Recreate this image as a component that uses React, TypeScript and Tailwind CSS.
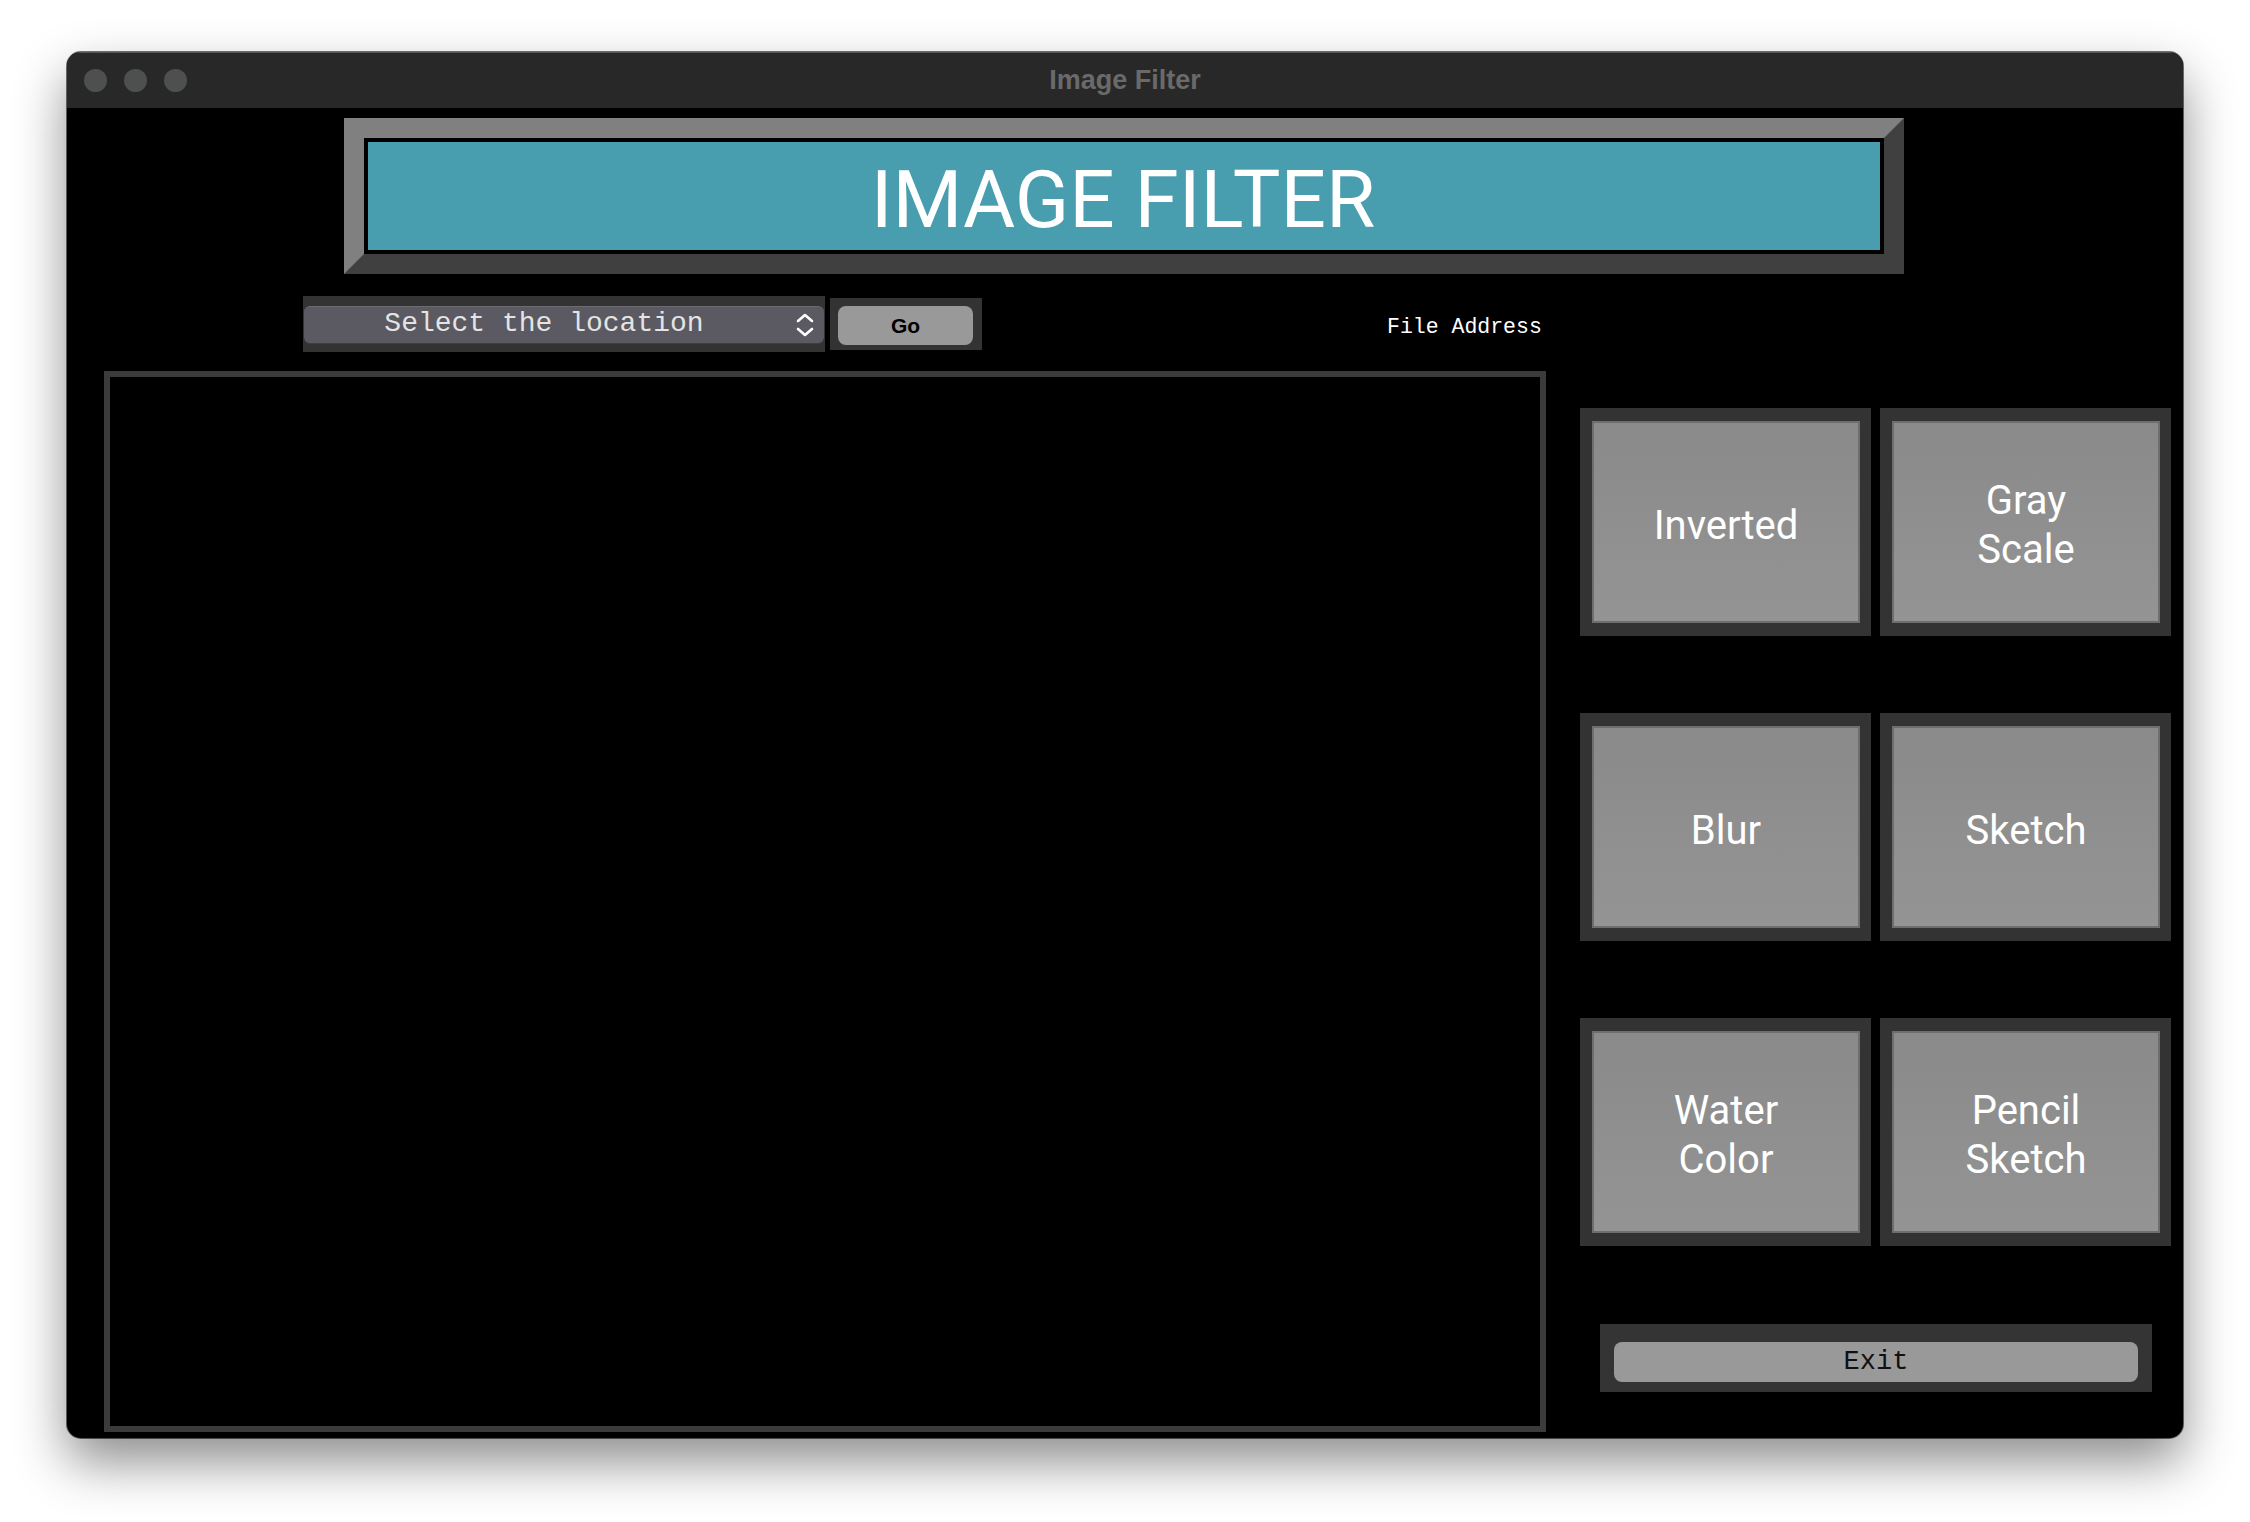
import React from 'react';

const mono = "font-['Liberation_Mono','Courier_New',monospace]";

const FilterButton: React.FC<{ lines: string[] }> = ({ lines }) => (
  <div className="bg-[#333333] pl-[12px] pr-[11px] py-[13px] w-[291px] h-[228px]">
    <button className="w-full h-full pt-[6px] border-2 border-[#6e6e6e] bg-linear-to-b from-[#8a8a8a] to-[#949494] flex flex-col items-center justify-center text-white text-[40px] leading-[49px] font-['Roboto',sans-serif]">
      {lines.map((l) => (
        <span key={l}>{l}</span>
      ))}
    </button>
  </div>
);

const App: React.FC = () => {
  return (
    <div className="w-[2250px] h-[1522px] bg-white pt-[52px] pl-[67px]">
      <div className="w-[2116px] h-[1386px] rounded-[14px] overflow-hidden flex flex-col bg-black shadow-[0_0_0_1px_rgba(0,0,0,0.55),0_24px_52px_rgba(0,0,0,0.45)]">
        {/* title bar */}
        <div className="h-[56px] shrink-0 bg-[#282828] grid grid-cols-[1fr_auto_1fr] items-center shadow-[inset_0_1px_0_rgba(255,255,255,0.22)]">
          <div className="flex gap-[17px] pl-[17px]">
            <span className="w-[23px] h-[23px] rounded-full bg-[#4e5050]" />
            <span className="w-[23px] h-[23px] rounded-full bg-[#4e5050]" />
            <span className="w-[23px] h-[23px] rounded-full bg-[#4e5050]" />
          </div>
          <div className="text-[27px] font-bold text-[#6a6a6a] font-['Liberation_Sans',Arial,sans-serif]">Image Filter</div>
          <div />
        </div>

        {/* content */}
        <div className="flex-1 flex flex-col">
          <div className="pt-[10px] pl-[277px]">
            <div className="w-[1560px] h-[156px] border-[20px] border-t-[#808080] border-l-[#808080] border-b-[#404040] border-r-[#404040]">
              <div className="w-full h-full border-4 border-black bg-[#489dae] flex items-center justify-center">
                <span className="text-white text-[80px] leading-none font-['Roboto',sans-serif] mt-[8px] -ml-[2px]">IMAGE FILTER</span>
              </div>
            </div>
          </div>

          <div className="mt-[22px] pl-[236px] flex items-center h-[56px]">
            <div className="w-[522px] h-[56px] bg-[#333333] pt-[10px] pb-[8px] px-[1px]">
              <div className="relative h-full rounded-[6px] bg-[#5b5961] border-t border-[#6d6b72] shadow-[inset_0_-1px_0_rgba(0,0,0,0.3)] flex items-center justify-center pr-[40px]">
                <span className={`${mono} text-[28px] text-[#e4e4e4] leading-none -mt-[4px]`}>Select the location</span>
                <svg className="absolute right-[10px] top-[5px]" width="18" height="26" viewBox="0 0 18 26" fill="none" stroke="white" strokeWidth="2.6" strokeLinecap="round" strokeLinejoin="round">
                  <path d="M2 9 L9 3 L16 9" />
                  <path d="M2 17 L9 23 L16 17" />
                </svg>
              </div>
            </div>
            <div className="ml-[5px] w-[152px] h-[52px] bg-[#333333] pl-[8px] pr-[9px] pt-[8px] pb-[5px]">
              <button className="w-full h-full rounded-[8px] bg-[#999999] text-black font-bold text-[21px] font-['Liberation_Sans',Arial,sans-serif] flex items-center justify-center">
                Go
              </button>
            </div>
            <span className={`${mono} ml-[405px] mt-[8px] text-white text-[21.5px] leading-none`}>File Address</span>
          </div>

          <div className="mt-[19px] flex">
            <div className="ml-[37px] w-[1442px] h-[1061px] border-[6px] border-[#3b3b3b] bg-black" />
            <div className="ml-[34px] w-[591px] pt-[37px] flex flex-col">
              <div className="grid grid-cols-[291px_291px] gap-x-[9px] gap-y-[77px]">
                <FilterButton lines={['Inverted']} />
                <FilterButton lines={['Gray', 'Scale']} />
                <FilterButton lines={['Blur']} />
                <FilterButton lines={['Sketch']} />
                <FilterButton lines={['Water', 'Color']} />
                <FilterButton lines={['Pencil', 'Sketch']} />
              </div>
              <div className="mt-[78px] ml-[20px] w-[552px] h-[68px] bg-[#343434] px-[14px] pt-[18px] pb-[10px]">
                <button className={`w-full h-full rounded-[8px] bg-[#999999] text-[#111111] ${mono} text-[27px] flex items-center justify-center`}>
                  Exit
                </button>
              </div>
            </div>
          </div>
        </div>
      </div>
    </div>
  );
};

export default App;
